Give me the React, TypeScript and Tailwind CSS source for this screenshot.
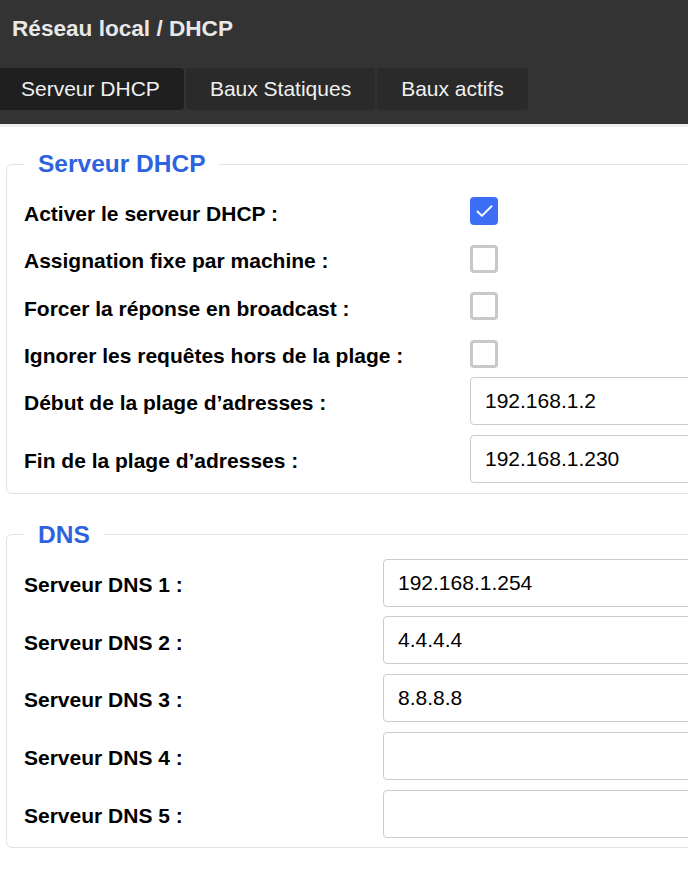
import { Check } from 'lucide-react';

const tabs = ['Serveur DHCP', 'Baux Statiques', 'Baux actifs'];

const dhcpToggles = [
  { label: 'Activer le serveur DHCP :', checked: true },
  { label: 'Assignation fixe par machine :', checked: false },
  { label: 'Forcer la réponse en broadcast :', checked: false },
  { label: 'Ignorer les requêtes hors de la plage :', checked: false },
];

const dhcpRange = [
  { label: 'Début de la plage d’adresses :', value: '192.168.1.2' },
  { label: 'Fin de la plage d’adresses :', value: '192.168.1.230' },
];

const dnsServers = ['192.168.1.254', '4.4.4.4', '8.8.8.8', '', ''];

function Checkbox({ checked }: { checked: boolean }) {
  if (checked) {
    return (
      <span className="flex h-[28px] w-[28px] items-center justify-center rounded-[4px] bg-[#3b6ef5]">
        <Check size={21} strokeWidth={2.2} className="text-white" />
      </span>
    );
  }
  return <span className="block h-[28px] w-[28px] rounded-[4px] border-[3px] border-[#c8c8c8] bg-white" />;
}

function TextInput({ value }: { value: string }) {
  return (
    <input
      type="text"
      defaultValue={value}
      className="h-[48px] w-[320px] rounded-[4px] border border-[#cccccc] bg-white pl-[14px] text-[21px] text-black outline-none"
    />
  );
}

function Legend({ children }: { children: string }) {
  return (
    <legend className="px-[14px] text-[24.5px] leading-[28px] font-bold text-[#2f62e0]">
      {children}
    </legend>
  );
}

export default function App() {
  return (
    <div className="min-h-[872px] w-[688px] overflow-hidden bg-white font-['Liberation_Sans',Arial,sans-serif]">
      <header className="h-[127px] border-b-[3px] border-[#efefef] bg-[#333333]">
        <h1 className="px-[12px] pt-[15px] text-[22.6px] leading-[28px] font-bold text-[#e8e8e8]">
          Réseau local / DHCP
        </h1>
        <nav className="ml-[-3px] mt-[25px] flex gap-[2px]">
          {tabs.map((tab, i) => (
            <button
              key={tab}
              className={`h-[42px] rounded-[4px] px-[24px] text-[21px] text-[#f0f0f0] ${
                i === 0 ? 'bg-[#1f1f1f]' : 'bg-[#2a2a2a]'
              }`}
            >
              {tab}
            </button>
          ))}
        </nav>
      </header>

      <fieldset className="ml-[6px] mt-[23px] w-[780px] rounded-[6px] border border-[#e2e2e2] pr-[17px] pb-[10px] pl-[17px]">
        <Legend>Serveur DHCP</Legend>
        <div className="flex flex-col pt-[19px]">
          {dhcpToggles.map((row, i) => (
            <div
              key={row.label}
              className={`flex h-[28px] items-center ${i === dhcpToggles.length - 1 ? 'mb-[9px]' : 'mb-[19.5px]'}`}
            >
              <span className="w-[446px] pt-[5px] text-[21px] font-bold text-black">{row.label}</span>
              <Checkbox checked={row.checked} />
            </div>
          ))}
          {dhcpRange.map((row) => (
            <div key={row.label} className="mb-[10px] flex h-[48px] items-center last:mb-0">
              <span className="w-[446px] pt-[4px] text-[21px] font-bold text-black">{row.label}</span>
              <TextInput value={row.value} />
            </div>
          ))}
        </div>
      </fieldset>

      <fieldset className="ml-[6px] mt-[27px] w-[780px] rounded-[6px] border border-[#e2e2e2] pr-[17px] pb-[9px] pl-[17px]">
        <Legend>DNS</Legend>
        <div className="flex flex-col gap-[9.75px] pt-[10px]">
          {dnsServers.map((value, i) => (
            <div key={i} className="flex h-[48px] items-center">
              <span className="w-[359px] pt-[4px] text-[21px] font-bold text-black">Serveur DNS {i + 1} :</span>
              <TextInput value={value} />
            </div>
          ))}
        </div>
      </fieldset>
    </div>
  );
}
